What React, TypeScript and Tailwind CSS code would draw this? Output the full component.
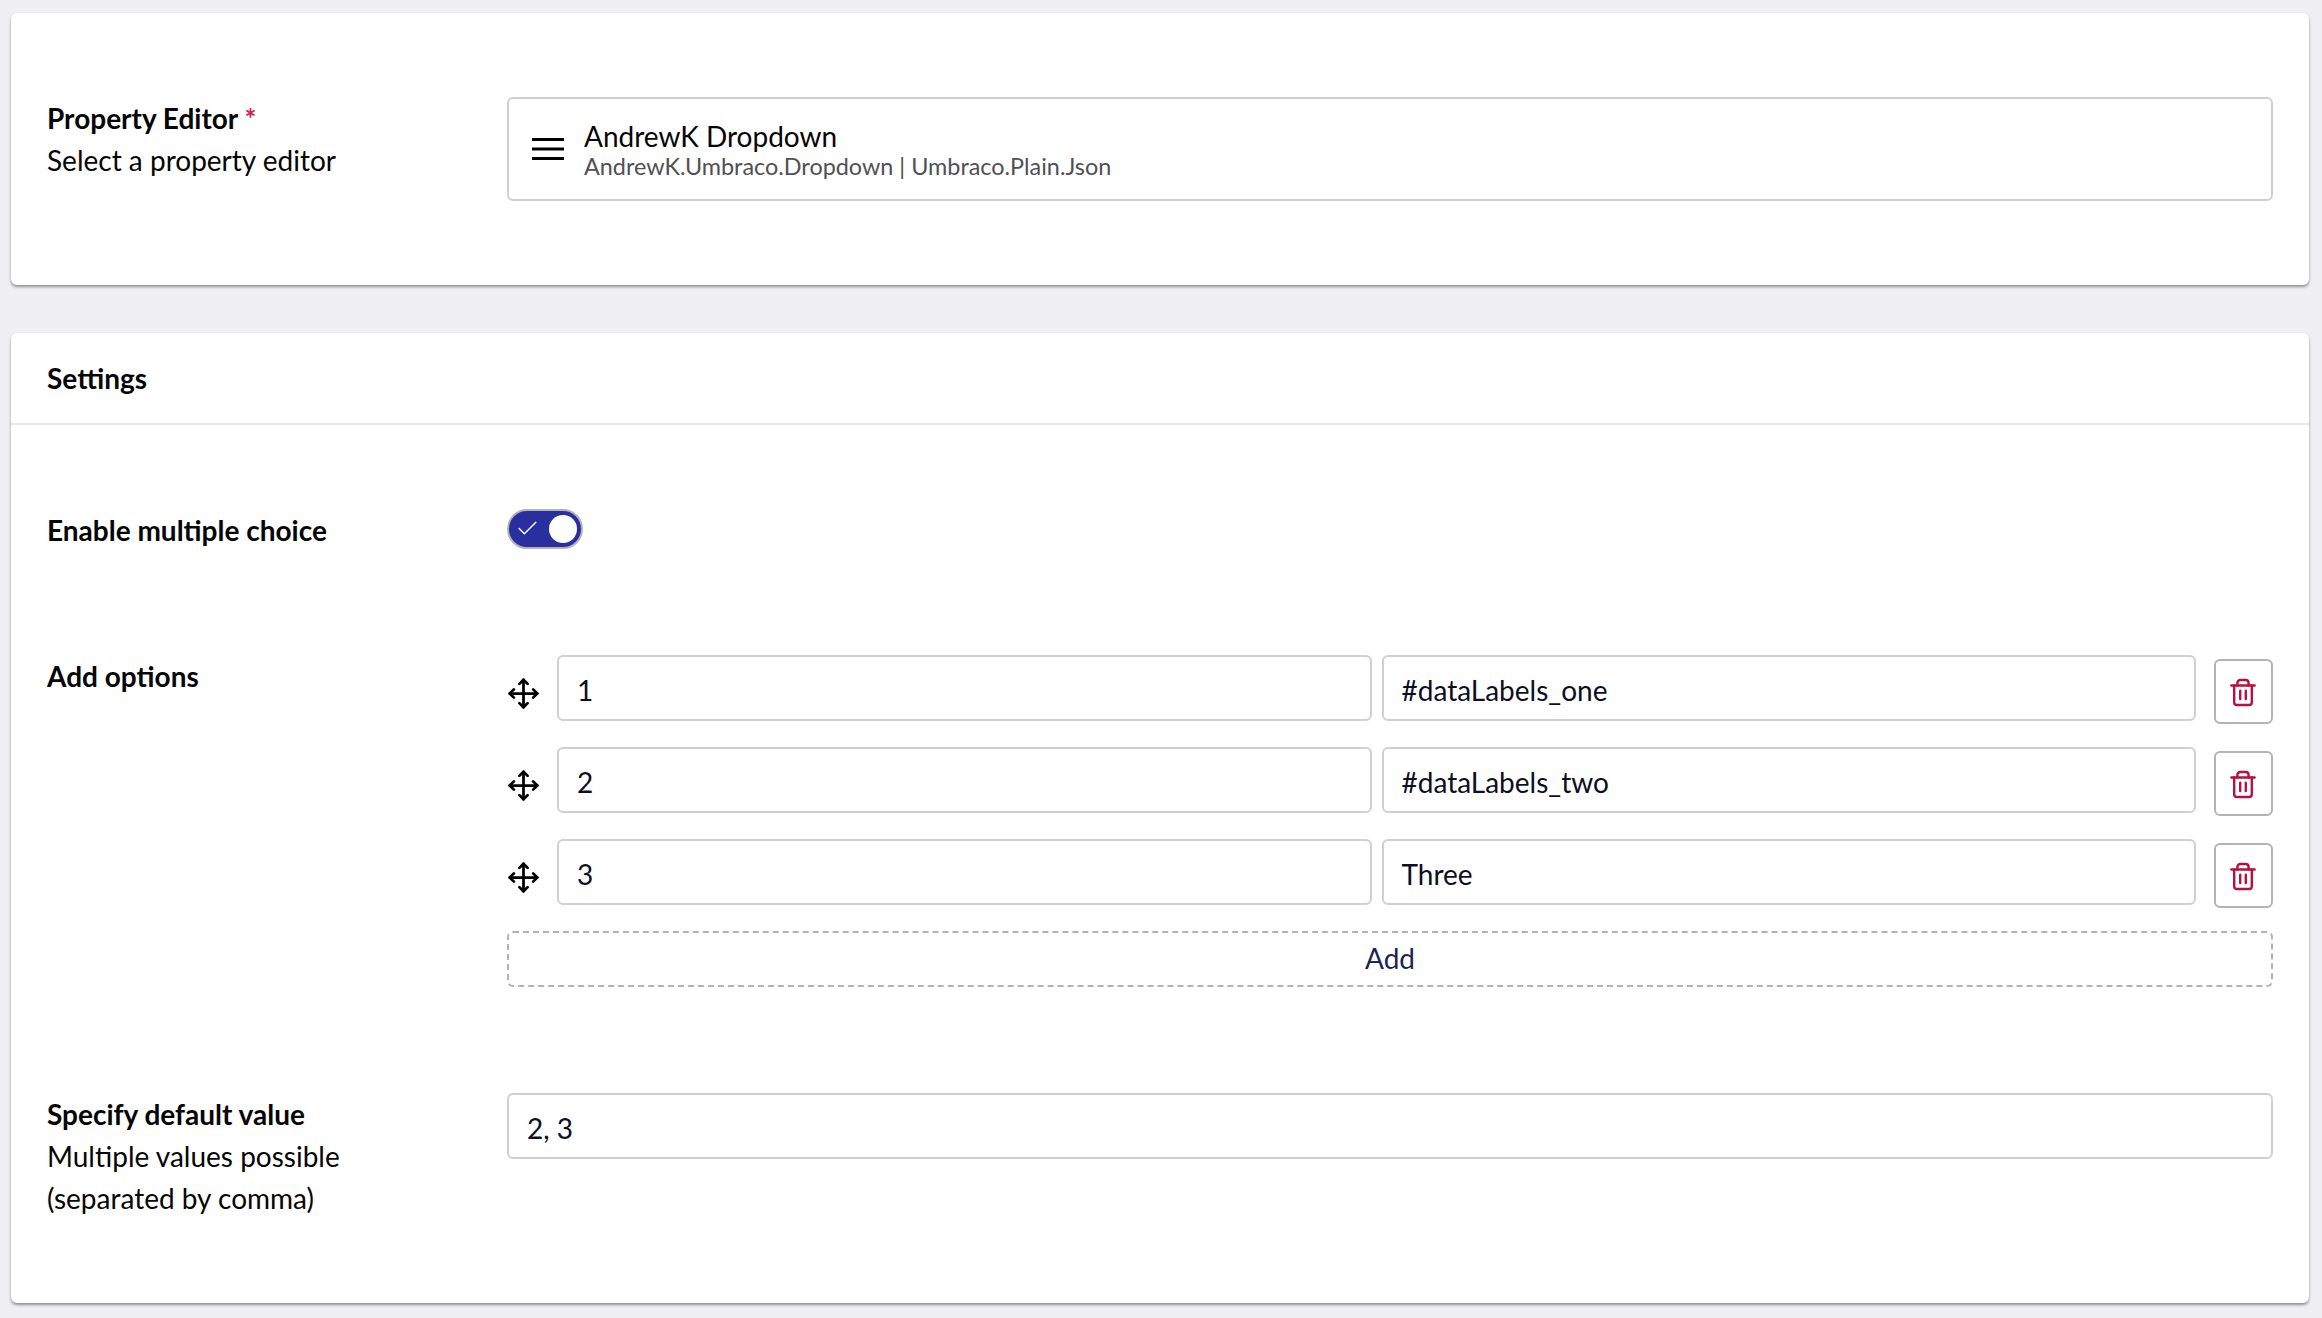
import React from 'react';
import { Check, Move } from 'lucide-react';

const font = { fontFamily: 'Lato, sans-serif' };

const options = [
  { id: '1', label: '#dataLabels_one' },
  { id: '2', label: '#dataLabels_two' },
  { id: '3', label: 'Three' },
];

function TextBox({ value, className }: { value: string; className?: string }) {
  return (
    <div className={`flex h-[66px] items-center rounded-[6px] border-2 border-[#d0d0d0] bg-white px-[18px] pt-[3px] text-[28px] text-[#0b0f1f] ${className ?? ''}`}>
      {value}
    </div>
  );
}

function TrashIcon() {
  return (
    <svg width="26" height="29" viewBox="0 0 28 30" fill="none" stroke="#b8113f" strokeWidth="2.6" strokeLinejoin="round" strokeLinecap="round">
      <path d="M1.5 7.5h25" />
      <path d="M8 7.5V4.5a3 3 0 0 1 3-3h6a3 3 0 0 1 3 3v3" />
      <path d="M4.5 7.5v18a3 3 0 0 0 3 3h13a3 3 0 0 0 3-3v-18" />
      <path d="M11 13v9M17 13v9" />
    </svg>
  );
}

export default function App() {
  return (
    <div style={font} className="min-h-[1318px] bg-[#f0f0f2] pl-[11px] pr-[13px] pt-[13px] text-[#060606]">
      {/* Property editor */}
      <div className="flex h-[272px] rounded-[6px] bg-white pl-[36px] pr-[36px] pt-[84px] shadow-[0_2px_3px_rgba(0,0,0,0.4)]">
        <div className="w-[460px] pt-[1px] text-[28px] leading-[42px]">
          <div className="-mt-[1px] font-bold">Property Editor <span className="text-[#d42054]">*</span></div>
          <div>Select a property editor</div>
        </div>
        <div className="flex h-[104px] flex-1 items-center rounded-[6px] border-2 border-[#d0d0d0] px-[23px]">
          <svg width="32" height="22" viewBox="0 0 32 22" className="mr-[20px] text-[#000]">
            <path d="M0 1.5h32M0 11h32M0 20.5h32" stroke="currentColor" strokeWidth="3" />
          </svg>
          <div>
            <div className="text-[28px] leading-[34px]">AndrewK Dropdown</div>
            <div className="text-[23.4px] leading-[26px] text-[#515054]">AndrewK.Umbraco.Dropdown | Umbraco.Plain.Json</div>
          </div>
        </div>
      </div>

      {/* Settings */}
      <div className="mt-[48px] h-[970px] rounded-[6px] bg-white shadow-[0_2px_3px_rgba(0,0,0,0.4)]">
        <div className="flex h-[92px] items-center border-b-2 border-[#e9e9eb] px-[36px] text-[28px] font-bold">Settings</div>
        <div className="pl-[36px] pr-[36px] pt-[84px]">
          <div className="flex h-[40px] items-center">
            <div className="w-[460px] pt-[2px] text-[28px] font-bold">Enable multiple choice</div>
            <div className="relative h-[40px] w-[76px] rounded-full border-2 border-[#b3b3b3] bg-[#2a2fa0]">
              <Check size={25} strokeWidth={1.4} className="absolute left-[6px] top-[5px] text-white" />
              <div className="absolute left-[40px] top-[4px] h-[28px] w-[28px] rounded-full bg-white" />
            </div>
          </div>

          <div className="mt-[106px] flex">
            <div className="w-[460px] text-[28px] font-bold">Add options</div>
            <div className="flex-1">
              {options.map(o => (
                <div key={o.id} className="mb-[26px] flex h-[66px] items-start">
                  <Move size={33} strokeWidth={2} className="mr-[17px] mt-[22px] shrink-0 text-[#000]" />
                  <TextBox value={o.id} className="flex-1" />
                  <TextBox value={o.label} className="ml-[10px] flex-1" />
                  <button className="ml-[18px] mt-[4px] flex h-[65px] w-[59px] shrink-0 items-center justify-center rounded-[6px] border-2 border-[#b3b3b3] pr-[1px] pt-[2px]">
                    <TrashIcon />
                  </button>
                </div>
              ))}
              <div className="flex h-[56px] items-center justify-center rounded-[6px] border-2 border-dashed border-[#b3b3b3] pb-[2px] text-[28px] text-[#1b264f]">Add</div>
            </div>
          </div>

          <div className="mt-[106px] flex">
            <div className="w-[460px] text-[28px] leading-[42px]">
              <div className="font-bold">Specify default value</div>
              <div>Multiple values possible</div>
              <div>(separated by comma)</div>
            </div>
            <TextBox value="2, 3" className="flex-1" />
          </div>
        </div>
      </div>
    </div>
  );
}
